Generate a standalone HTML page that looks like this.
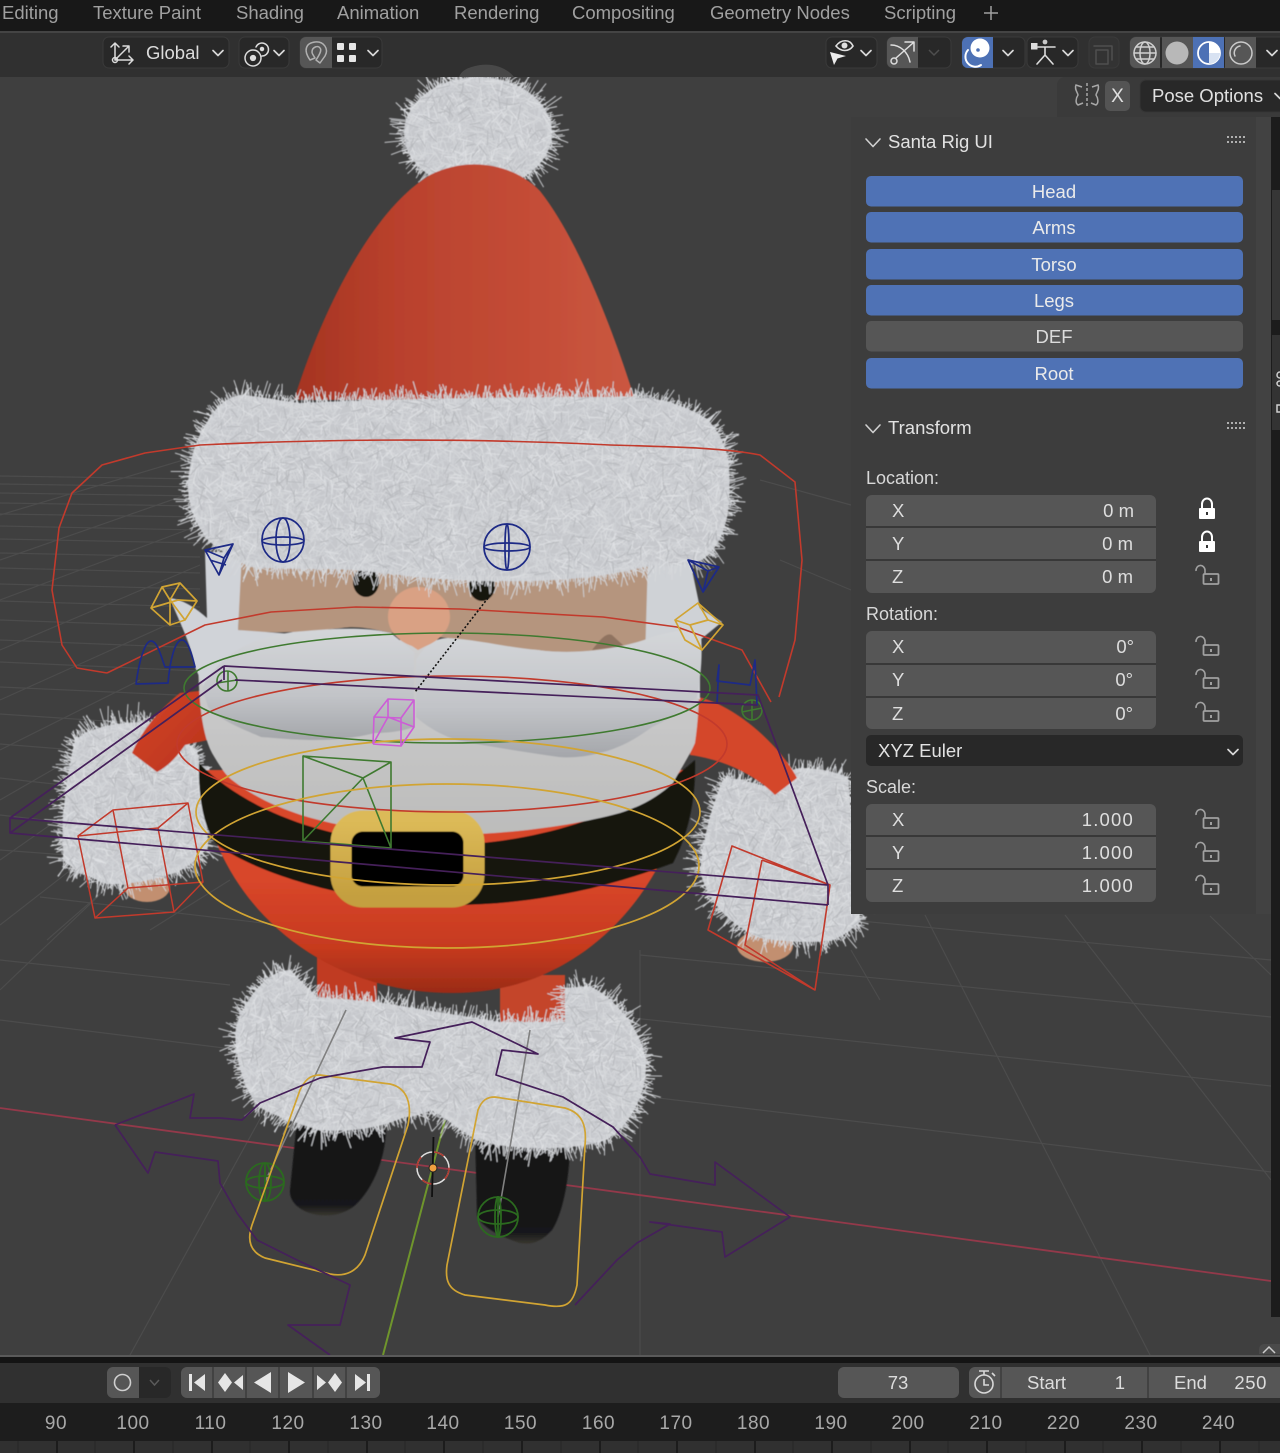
<!DOCTYPE html>
<html><head><meta charset="utf-8"><title>Santa Rig</title>
<style>html,body{margin:0;padding:0;background:#3f3f3f;width:1280px;height:1453px;overflow:hidden}svg{display:block}text{font-family:"Liberation Sans",sans-serif}</style></head>
<body>
<svg id="root" xmlns="http://www.w3.org/2000/svg" width="1280" height="1453" viewBox="0 0 1280 1453">
<defs>
<filter id="soft" x="-5%" y="-5%" width="110%" height="110%"><feGaussianBlur stdDeviation="0.55"/></filter>
<linearGradient id="hat" x1="0" y1="0" x2="1" y2="0"><stop offset="0" stop-color="#a53421"/><stop offset="0.3" stop-color="#b9412d"/><stop offset="0.7" stop-color="#c44d37"/><stop offset="1" stop-color="#ca5841"/></linearGradient>
<linearGradient id="red" x1="0" y1="0" x2="0" y2="1"><stop offset="0.5" stop-color="#d8462a"/><stop offset="0.8" stop-color="#c63a1f"/><stop offset="1" stop-color="#9a2b17"/></linearGradient>
<linearGradient id="belly" x1="0" y1="0" x2="0" y2="1"><stop offset="0" stop-color="#cfcfd0"/><stop offset="1" stop-color="#bcbcbb"/></linearGradient>
<linearGradient id="mus" x1="0" y1="0" x2="0" y2="1"><stop offset="0" stop-color="#d4d6d9"/><stop offset="0.6" stop-color="#c2c4c8"/><stop offset="1" stop-color="#a4a6aa"/></linearGradient>
<linearGradient id="boot" x1="0" y1="0" x2="0" y2="1"><stop offset="0" stop-color="#131315"/><stop offset="0.9" stop-color="#18181a"/><stop offset="1" stop-color="#38362f"/></linearGradient>
<linearGradient id="arm" x1="0" y1="0" x2="1" y2="1"><stop offset="0" stop-color="#d4452a"/><stop offset="1" stop-color="#b9331b"/></linearGradient>
<linearGradient id="buckle" x1="0" y1="0" x2="0" y2="1"><stop offset="0" stop-color="#dcba58"/><stop offset="1" stop-color="#c49f3f"/></linearGradient>
<symbol id="lock" overflow="visible"><path d="M-5 -1v-4a5 5.500 0 0 1 10 0v4" fill="none" stroke="#fff" stroke-width="2"/><rect x="-8" y="-1" width="16" height="11" rx="1" fill="#fff"/><rect x="-1" y="3" width="2" height="3" fill="#333"/></symbol>
<symbol id="unlock" overflow="visible"><path d="M-11 -3a4.500 5 0 0 1 9 -1v4" fill="none" stroke="#a0a0a0" stroke-width="1.600"/><rect x="-3.500" y="0" width="15" height="10" rx="1" fill="none" stroke="#a0a0a0" stroke-width="1.800"/><rect x="3" y="4" width="2" height="3" fill="#a0a0a0"/></symbol>
<symbol id="chev" overflow="visible"><path d="M-5 -2.500L0 2.500L5 -2.500" fill="none" stroke="#d8d8d8" stroke-width="1.700" stroke-linecap="round" stroke-linejoin="round"/></symbol>
<symbol id="pchev" overflow="visible"><path d="M-7 -4L0 3.500L7 -4" fill="none" stroke="#d0d0d0" stroke-width="1.600" stroke-linecap="round" stroke-linejoin="round"/></symbol>
<symbol id="grip" overflow="visible"><path d="M0 0h19M0 5h19" stroke="#b0b0b0" stroke-width="2" stroke-dasharray="2 2"/></symbol>
</defs>

<!-- viewport -->
<rect width="1280" height="1453" fill="#3f3f3f"/>
<g stroke="#4c4c4c" stroke-width="1.200" fill="none">
<path d="M0 476L200 479M0 484L200 487M0 493L200 496M0 503L200 506M0 514L200 517M0 526L200 530M0 539L200 543M0 553L200 557M0 568L200 573M0 584L200 589M0 601L200 607M0 620L200 627M0 640L200 648M0 662L200 671M0 687L200 696M0 714L120 722M0 744L100 752M0 778L90 788M0 815L60 822M0 850L80 856M40 897L280 925M0 960L230 985M0 1020L240 1050"/>
<path d="M0 515L200 455M0 560L200 490M0 600L200 525M0 650L200 565M0 700L200 610M0 750L140 680M0 800L130 725M0 860L100 790M0 925L90 855M0 990L110 885M47 940L110 885M150 930L230 880"/>
<path d="M850 920L1271 960M640 955L1080 998L1271 1017M633 1018L1080 1065L1271 1086M650 1097L1080 1148L1271 1172"/>
<path d="M130 1355L320 1010M640 1355V950M1150 1355L925 915M1271 1180L1065 915M1271 975L1210 916M851 950L880 1000M760 480L851 505M780 560L851 590M770 760L851 820"/>
</g>
<path d="M0 1108L1271 1281" stroke="#93394a" stroke-width="1.800"/>
<path d="M383 1355L445 1120" stroke="#6f952c" stroke-width="2"/>

<g id="santa" filter="url(#soft)">
<!-- hands -->
<ellipse cx="147" cy="887" rx="23" ry="15" fill="#c28f70"/>
<ellipse cx="765" cy="946" rx="28" ry="16" fill="#c28f70"/>
<!-- gloves -->
<path id="f1" d="M75 740C95 724 125 722 150 722C175 735 190 745 197 750C205 790 208 830 208 847C195 863 180 873 167 875C145 882 125 885 107 884C90 878 72 868 64 861C62 840 62 820 64 807C66 785 70 760 75 740Z" fill="#c6c8cc"/>
<path id="f2" d="M700 870C703 845 707 825 712 810C717 795 720 785 724 778C740 778 755 784 770 787C780 775 790 769 800 768C820 768 835 772 848 777C852 820 856 880 860 922C850 931 842 937 830 941C810 943 785 942 760 938C745 932 732 922 722 912C710 898 703 885 700 870Z" fill="#c6c8cc"/>
<!-- arms -->
<path d="M180 693C155 713 140 735 132 753L157 772C170 765 178 755 185 745L208 740L208 690Z" fill="url(#arm)"/>
<path d="M698 697C735 705 780 745 797 778L775 795C755 775 725 760 690 755Z" fill="#d4472b"/>
<!-- legs -->
<rect x="317" y="955" width="60" height="50" fill="#c03a20"/>
<rect x="500" y="975" width="65" height="50" fill="#c4442b"/>
<!-- boots -->
<path d="M298 1110L386 1130C385 1165 368 1195 353 1207C340 1216 328 1216 318 1215C300 1212 289 1202 290 1190Z" fill="url(#boot)"/>
<path d="M475 1130L570 1140C570 1180 562 1215 552 1230C540 1243 530 1245 520 1243C495 1235 480 1225 477 1215Z" fill="url(#boot)"/>
<!-- fur boots -->
<path id="f3" d="M236 1027C248 992 270 970 290 970L317 997L377 1002L500 1022L565 1022L565 988L590 986C622 1002 646 1040 646 1065C646 1098 628 1126 608 1139C580 1151 510 1151 477 1140C455 1128 440 1113 432 1110C425 1113 415 1117 405 1117C375 1130 345 1132 320 1130C290 1122 267 1112 259 1107C242 1088 233 1050 236 1027Z" fill="#c6c8cc"/>
<!-- body red -->
<path d="M200 770C205 880 300 993 453 993C590 993 675 880 690 770Z" fill="url(#red)"/>
<!-- belt -->
<path d="M199 763C198 800 205 835 220 847C270 880 370 905 450 905C530 905 600 890 673 863C688 835 696 800 695 760C640 810 540 845 440 845C340 845 250 815 199 763Z" fill="#131311"/>
<!-- belly -->
<path d="M198 640C198 690 200 730 212 753C222 770 226 775 232 780C255 798 280 808 301 815C350 830 400 835 457 835C520 833 575 825 620 813C645 805 660 795 673 783C680 770 690 755 695 743C700 710 700 670 698 640Z" fill="url(#belly)"/>
<!-- face -->
<path d="M240 545H652L652 640C620 650 570 655 538 650C500 648 470 642 448 638L391 633C370 628 355 626 342 628C320 630 305 633 293 632C270 633 252 632 238 630Z" fill="#b5957e"/>
<path d="M205 552L242 552L238 630L293 634L240 680L205 690L195 667C190 640 178 620 170 598C185 600 198 610 207 618Z" fill="#d0d3d8"/>
<path d="M648 555L690 560L700 608L722 622L700 640L700 700L645 660Z" fill="#cfd2d6"/>
<path d="M592 650C600 640 606 632 612 635L624 646Z" fill="#8f7360"/>
<!-- mustache -->
<path d="M202 688C218 660 240 640 293 632C320 630 360 625 391 633L414 652V727C400 732 385 733 375 733C355 738 335 740 314 740C295 740 275 738 261 737C240 728 220 720 208 707Z" fill="url(#mus)"/>
<path d="M416 660C425 645 435 638 448 638C480 640 510 648 538 650C570 655 620 650 652 637C675 630 695 628 701 633C703 660 700 680 697 697C685 708 668 720 652 727C635 740 615 750 599 753C585 757 570 758 559 757C525 752 490 747 457 740C440 735 425 725 416 717Z" fill="url(#mus)"/>
<!-- eyes, nose -->
<ellipse cx="366" cy="582" rx="13" ry="15" fill="#17120e"/>
<ellipse cx="482" cy="586" rx="13" ry="15" fill="#17120e"/>
<path d="M388 617C388 600 402 587 418 587C436 587 450 600 450 617C450 632 436 642 426 646L418 650L412 646C400 642 388 632 388 617Z" fill="#d9a184"/>
<!-- buckle -->
<rect x="341" y="821" width="133" height="76" rx="22" fill="#060606" stroke="url(#buckle)" stroke-width="21"/>
<!-- pom -->
<ellipse id="f4" cx="478" cy="133" rx="74" ry="56" fill="#c6c8cc"/>
<!-- hat -->
<path d="M294 400C318 322 368 212 430 175C470 155 515 165 540 191C575 235 610 320 635 400Z" fill="url(#hat)"/>
<!-- hat band -->
<path id="f5" d="M188 490C188 470 192 445 207 422C215 408 225 398 240 395C260 396 275 400 300 403C400 398 540 397 637 397C660 398 685 405 707 419C720 432 728 450 729 467C730 490 730 510 725 525C720 545 708 558 696 563C680 566 660 566 644 567C600 578 550 582 503 581C450 582 400 575 355 570C320 568 285 570 251 567C235 560 218 550 207 539C198 527 190 512 188 490Z" fill="#c6c8cc"/>
</g>

<!-- rig -->
<g fill="none" stroke-width="1.600" stroke-linejoin="round">
<!-- red curves -->
<g stroke="#c23a2c">
<path d="M107 673L77 668L62 645L52 590L59 528L72 493L102 465L145 453L200 445C300 440 450 437 610 445C680 447 725 448 760 455L795 482L802 560L795 640L779 697"/>
<path d="M107 673L205 625L271 612L356 607L460 609L603 617L677 627L742 650L771 702"/>
<ellipse cx="452" cy="744" rx="275" ry="68"/>
<path d="M113 810L188 803L203 882L128 888ZM78 836L158 828L174 912L95 918ZM113 810L78 836M188 803L158 828M203 882L174 912M128 888L95 918" stroke-width="1.500"/>
<path d="M732 846L830 885L815 990L708 930ZM732 846L708 930M762 860L745 945L815 990M762 860L830 885"/>
</g>
<!-- green -->
<g stroke="#3f7a30">
<ellipse cx="447" cy="688" rx="263" ry="55"/>
<path d="M303 756L391 762V848L303 841ZM303 756L363 778L391 762M363 778L303 841M363 778L391 848"/>
<circle cx="227" cy="681" r="10"/><path d="M217 683L237 680M228 671V691"/>
<circle cx="752" cy="710" r="10"/><path d="M742 712L762 708M752 700V720"/>
</g>
<path d="M346 1010L265 1182M530 1030L498 1217" stroke="#808080"/>
<g stroke="#2b6a1f" stroke-width="1.800"><circle cx="265" cy="1182" r="19"/><ellipse cx="265" cy="1182" rx="19" ry="6"/><path d="M265 1163V1202"/><ellipse cx="265" cy="1182" rx="6" ry="19"/><circle cx="498" cy="1217" r="20"/><ellipse cx="498" cy="1217" rx="20" ry="7"/><ellipse cx="498" cy="1217" rx="3" ry="20"/><path d="M498 1196V1238"/></g>
<!-- gold -->
<g stroke="#d1a433" stroke-width="1.700">
<ellipse cx="448" cy="812" rx="252" ry="73"/>
<ellipse cx="447" cy="866" rx="252" ry="82"/>
<path d="M162 587L180 583L197 601L185 620L170 625L151 608ZM151 608L178 600L197 601M162 587L170 600L185 620M180 583L170 600L170 625"/>
<path d="M675 620L698 603L723 625L702 650L685 640ZM698 603L708 620L723 625M675 620L690 625L708 620M690 625L702 650"/>
<path d="M320 1075L390 1084C408 1088 412 1105 408 1125L365 1255C358 1272 345 1277 330 1274L265 1258C250 1252 247 1240 252 1225L300 1090C305 1080 310 1075 320 1075Z"/>
<path d="M495 1097L565 1108C582 1113 587 1125 585 1145L577 1285C573 1305 565 1309 545 1305L465 1295C448 1290 445 1280 447 1265L478 1110C482 1100 487 1097 495 1097Z"/>
</g>
<!-- blue -->
<g stroke="#1d2a86" stroke-width="1.700">
<ellipse cx="283" cy="540" rx="21" ry="22"/><ellipse cx="283" cy="541" rx="21" ry="4"/><ellipse cx="283" cy="540" rx="7" ry="22"/>
<ellipse cx="507" cy="547" rx="23" ry="23"/><ellipse cx="507" cy="547" rx="23" ry="4"/><ellipse cx="507" cy="547" rx="2" ry="23"/>
<path d="M205 550L233 544L219 575ZM205 550L224 558L233 544M224 558L219 575M210 560L226 565"/>
<path d="M688 560L719 567L703 592ZM688 560L708 571L719 567M708 571L703 592"/>
<path d="M136 684C140 655 146 641 151 641C158 641 162 660 165 667H195C192 655 188 640 182 640C175 640 170 660 168 683Z"/>
<path d="M719 665L717 681L750 685L755 660L757 705L717 703Z"/>
</g>
<!-- magenta -->
<path d="M374 717L388 699L414 700L401 718ZM373 744L401 746L414 727V700M374 717L373 744M401 718V746M388 717L373 744M388 699V717L414 727" stroke="#cc5dd6"/>
<!-- dotted -->
<path d="M488 598L415 692" stroke="#111" stroke-dasharray="2 2"/>
<!-- purple -->
<g stroke="#45205a" stroke-width="1.700">
<path d="M224 666L10 818L10 833L222 680M224 666L758 695L828 885L828 905M235 680L757 705M10 818L828 885M10 833L828 905M224 666V680"/>
<path d="M115 1125L194 1094L190 1118L220 1118L242 1120L260 1103L320 1078L383 1067L422 1067L430 1042L395 1038L472 1022L538 1054L502 1050L496 1075L563 1097L613 1127L640 1157L650 1174L715 1185L715 1162L790 1217L725 1257L722 1232L650 1222L670 1224L637 1243L617 1260L575 1305"/>
<path d="M115 1125L148 1173L155 1152L218 1161L220 1183L237 1213L257 1240L297 1260L350 1285L340 1325H288L330 1355"/>
</g>
</g>
<!-- origin -->
<g fill="none"><circle cx="433" cy="1168" r="16" stroke="#e0e0e0" stroke-width="1.500"/><circle cx="433" cy="1168" r="16" stroke="#b03a30" stroke-width="1.600" stroke-dasharray="12 13"/><path d="M433.500 1137L432 1197" stroke="#111" stroke-width="1.800"/></g><circle cx="433" cy="1168" r="4" fill="#f0a040" stroke="#222"/>

<!-- top bar -->
<rect width="1280" height="31" fill="#181818"/>
<rect y="31" width="1280" height="2" fill="#444"/>
<g fill="#a0a0a0" font-size="18.500">
<text x="2" y="19">Editing</text><text x="93" y="19">Texture Paint</text><text x="236" y="19">Shading</text><text x="337" y="19">Animation</text><text x="454" y="19">Rendering</text><text x="572" y="19">Compositing</text><text x="710" y="19">Geometry Nodes</text><text x="884" y="19">Scripting</text>
</g>
<path d="M991 6V20M984 13H998" stroke="#a0a0a0" stroke-width="1.500"/>
<!-- tool header -->
<rect y="33" width="1280" height="44" fill="#303030"/>
<path d="M459 77C462 69 470 67 480 65C495 63 508 69 514 77Z" fill="#484848"/>
<g fill="#282828" stroke="#3a3a3a">
<rect x="103" y="37" width="126" height="31" rx="6"/>
<rect x="239" y="37" width="50" height="31" rx="6"/>
<rect x="300" y="37" width="82" height="31" rx="6"/>
<rect x="826" y="37" width="51" height="31" rx="6"/>
<rect x="887" y="37" width="64" height="31" rx="6"/>
<rect x="962" y="37" width="63" height="31" rx="6"/>
<rect x="1027" y="37" width="51" height="31" rx="6"/>
<rect x="1089" y="37" width="30" height="31" rx="6" fill="#333"/>
<rect x="1130" y="37" width="160" height="31" rx="6"/>
</g>
<path d="M306 37h26v31h-26a6 6 0 0 1-6-6v-19a6 6 0 0 1 6-6Z" fill="#565656"/>
<path d="M893 37h25v31h-25a6 6 0 0 1-6-6v-19a6 6 0 0 1 6-6Z" fill="#565656"/>
<path d="M968 37h25v31h-25a6 6 0 0 1-6-6v-19a6 6 0 0 1 6-6Z" fill="#4d71b5"/>
<path d="M1136 37h24v31h-24a6 6 0 0 1-6-6v-19a6 6 0 0 1 6-6Z" fill="#565656"/>
<rect x="1162" y="37" width="31" height="31" fill="#565656"/><rect x="1193" y="37" width="31" height="31" fill="#4d71b5"/><rect x="1225" y="37" width="31" height="31" fill="#565656"/>
<!-- icons toolbar -->
<g fill="none" stroke="#dcdcdc" stroke-width="1.500" stroke-linecap="round" stroke-linejoin="round">
<path d="M115 60V43M111 47L115 43L119 47M115 60H133M129 56L133 60L129 64M115 60L129 46M123 46H129V52"/><circle cx="115" cy="60" r="2.500"/>
<circle cx="253" cy="58" r="8"/><circle cx="253" cy="58" r="2.400" fill="#dcdcdc"/><path d="M256 47a6.500 6.500 0 1 1 6 9"/><circle cx="262" cy="49" r="1.500" fill="#dcdcdc"/>
<path d="M310 60C303 50 306 43 315 42C324 41 329 49 325 56L320 63L316 60C320 54 322 50 320 48C318 45 312 47 312 52C312 54 314 56 315 58L310 60" stroke="#b0b0b0"/>
<path d="M891 45C900 45 908 52 910 62M896 58L913 43M905 42H914V51" stroke="#dedede"/><circle cx="894" cy="61" r="3"/>
<path d="M968 50A10 10 0 0 0 981 65" stroke="#fff" stroke-width="2"/>
<path d="M1038 47H1055M1045 47V55L1037 64M1045 55L1053 64" stroke-width="1.600"/>
<path d="M1094 46H1112V60M1096 50H1108V64H1096Z" stroke="#4f4f4f"/>
<g stroke="#d0d0d0"><circle cx="1145" cy="53" r="11"/><ellipse cx="1145" cy="53" rx="5" ry="11"/><path d="M1134 53H1156M1136 47H1154M1136 59H1154"/></g>
<circle cx="1241" cy="53" r="11" stroke="#cacaca"/><path d="M1235 56a7 7 0 0 1 5-10" stroke="#cacaca"/>
</g>
<circle cx="980" cy="48" r="9.500" fill="#fff"/><circle cx="978" cy="50" r="1.800" fill="#4d71b5"/>
<rect x="1031" y="43" width="6.500" height="6.500" fill="#dcdcdc"/><circle cx="1045" cy="42" r="2.400" fill="#c8c8c8"/>
<circle cx="1177" cy="53" r="11.500" fill="#b8b8b8"/>
<circle cx="1209" cy="53" r="11" fill="#4d71b5" stroke="#fff" stroke-width="1.800"/><path d="M1209 42a11 11 0 0 1 0 22Z" fill="#fff"/><path d="M1209 53H1220A11 11 0 0 1 1209 64Z" fill="#d8e2f2"/>
<!-- eye icon -->
<path d="M836 46C841 39 850 39 853 46C849 52 841 52 836 46Z" fill="none" stroke="#e0e0e0" stroke-width="1.600"/><circle cx="844.500" cy="45.500" r="3" fill="#e0e0e0"/>
<path d="M830 52L846 56L837.500 58.500L834 65Z" fill="#ececec"/>
<!-- grid dots -->
<g fill="#e6e6e6"><rect x="337" y="43" width="7" height="7" rx="1"/><rect x="349" y="43" width="7" height="7" rx="1"/><rect x="337" y="55" width="7" height="7" rx="1"/><rect x="349" y="55" width="7" height="7" rx="1"/></g>
<text x="146" y="59" fill="#dcdcdc" font-size="18.500">Global</text>
<use href="#chev" x="218" y="53"/><use href="#chev" x="279" y="53"/><use href="#chev" x="373" y="53"/><use href="#chev" x="866" y="53"/><use href="#chev" x="1008" y="53"/><use href="#chev" x="1068" y="53"/><use href="#chev" x="1272" y="53"/>
<path d="M929 50L934 55L939 50" fill="none" stroke="#4e4e4e" stroke-width="1.500"/>

<!-- sidebar -->
<rect x="851" y="117" width="405" height="290" fill="#3d3d3d"/>
<rect x="851" y="404" width="405" height="510" fill="#3d3d3d"/>
<rect x="1256" y="117" width="15" height="797" fill="#424242"/>
<rect x="1271" y="117" width="9" height="1200" fill="#1c1c1c"/>
<rect x="1272" y="190" width="8" height="130" fill="#363636"/>
<rect x="1272" y="335" width="8" height="95" fill="#333"/>
<path d="M1280 372C1276 372 1276 378 1280 378M1280 381C1276 381 1276 386 1280 386M1280 405H1277V412H1280" fill="none" stroke="#cfcfcf" stroke-width="1.500"/>
<!-- pose options tab -->
<path d="M1057 117V85a8 8 0 0 1 8-8H1280V117Z" fill="#3a3a3a"/>
<g fill="none" stroke="#a8a8a8" stroke-width="1.500"><path d="M1087 83V107" stroke-dasharray="3 2"/><path d="M1082 87L1076 85C1074 89 1078 93 1078 95C1076 98 1075 103 1078 105L1083 103M1092 87L1098 85C1100 89 1096 93 1096 95C1098 98 1099 103 1096 105L1091 103"/></g>
<rect x="1105" y="81" width="25" height="30" rx="5" fill="#545454"/>
<text x="1117.500" y="102" fill="#e0e0e0" font-size="19" text-anchor="middle">X</text>
<rect x="1140" y="80" width="150" height="32" rx="6" fill="#282828" stroke="#353535"/>
<text x="1152" y="102" fill="#e0e0e0" font-size="18.500">Pose Options</text>
<use href="#chev" x="1280" y="96"/>

<!-- Santa Rig UI panel -->
<use href="#pchev" x="873" y="143"/>
<text x="888" y="148" fill="#e2e2e2" font-size="18.500">Santa Rig UI</text>
<use href="#grip" x="1227" y="137"/>
<g>
<rect x="866" y="176" width="377" height="30.500" rx="5" fill="#4f72b5"/>
<rect x="866" y="212" width="377" height="30.500" rx="5" fill="#4f72b5"/>
<rect x="866" y="249" width="377" height="30.500" rx="5" fill="#4f72b5"/>
<rect x="866" y="285" width="377" height="30.500" rx="5" fill="#4f72b5"/>
<rect x="866" y="321" width="377" height="30.500" rx="5" fill="#565656"/>
<rect x="866" y="358" width="377" height="30.500" rx="5" fill="#4f72b5"/>
</g>
<g fill="#eaeaea" font-size="18.500" text-anchor="middle">
<text x="1054" y="198">Head</text><text x="1054" y="234">Arms</text><text x="1054" y="271">Torso</text><text x="1054" y="307">Legs</text><text x="1054" y="343" fill="#dcdcdc">DEF</text><text x="1054" y="380">Root</text>
</g>
<!-- Transform panel -->
<use href="#pchev" x="873" y="429"/>
<text x="888" y="434" fill="#e2e2e2" font-size="18.500">Transform</text>
<use href="#grip" x="1227" y="423"/>
<g fill="#d8d8d8" font-size="18"><text x="866" y="484">Location:</text><text x="866" y="620">Rotation:</text><text x="866" y="793">Scale:</text></g>
<g fill="#565656">
<rect x="866" y="495" width="290" height="98" rx="6"/>
<rect x="866" y="631" width="290" height="98" rx="6"/>
<rect x="866" y="804" width="290" height="98" rx="6"/>
</g>
<g stroke="#383838" stroke-width="2"><path d="M866 527H1156M866 560H1156M866 664H1156M866 697H1156M866 836H1156M866 869H1156"/></g>
<g fill="#dedede" font-size="18.500">
<text x="892" y="517">X</text><text x="892" y="550">Y</text><text x="892" y="583">Z</text>
<text x="892" y="653">X</text><text x="892" y="686">Y</text><text x="892" y="720">Z</text>
<text x="892" y="826">X</text><text x="892" y="859">Y</text><text x="892" y="892">Z</text>
</g>
<g fill="#dedede" font-size="18.500" text-anchor="end">
<text x="1134" y="517">0 m</text><text x="1133" y="550">0 m</text><text x="1133" y="583">0 m</text>
<text x="1134" y="653">0°</text><text x="1133" y="686">0°</text><text x="1133" y="720">0°</text>
<g letter-spacing="1.200"><text x="1134" y="826">1.000</text><text x="1134" y="859">1.000</text><text x="1134" y="892">1.000</text></g>
</g>
<use href="#lock" x="1207" y="509"/><use href="#lock" x="1207" y="542"/>
<use href="#unlock" x="1207" y="574"/><use href="#unlock" x="1207" y="645"/><use href="#unlock" x="1207" y="678"/><use href="#unlock" x="1207" y="711"/><use href="#unlock" x="1207" y="818"/><use href="#unlock" x="1207" y="851"/><use href="#unlock" x="1207" y="884"/>
<rect x="866" y="735" width="377" height="31" rx="5" fill="#282828"/>
<text x="878" y="757" fill="#e2e2e2" font-size="18.500">XYZ Euler</text>
<use href="#chev" x="1233" y="752"/>

<!-- timeline -->
<rect y="1355" width="1280" height="2" fill="#5a5a5a"/>
<rect y="1357" width="1280" height="6" fill="#141414"/>
<rect y="1363" width="1280" height="40" fill="#303030"/>
<rect y="1403" width="1280" height="38" fill="#1d1d1d"/>
<rect y="1441" width="1280" height="12" fill="#303030"/>
<path d="M1259 1354h21v-10h-16a5 5 0 0 0-5 5Z" fill="#4a4a4a"/><path d="M1263 1353L1269 1347L1275 1353" fill="none" stroke="#ccc" stroke-width="1.500"/>
<path d="M107 1373a6 6 0 0 1 6-6H139V1398H113a6 6 0 0 1-6-6Z" fill="#565656"/>
<path d="M139 1367H165a6 6 0 0 1 6 6V1392a6 6 0 0 1-6 6H139Z" fill="#282828"/>
<circle cx="122.500" cy="1382.500" r="8" fill="none" stroke="#cfcfcf" stroke-width="1.600"/>
<path d="M150 1380L154.500 1385L159 1380" fill="none" stroke="#5a5a5a" stroke-width="1.500"/>
<rect x="181" y="1367" width="199" height="31" rx="6" fill="#565656"/>
<path d="M213 1367V1398M246 1367V1398M279 1367V1398M313 1367V1398M346 1367V1398" stroke="#3c3c3c" stroke-width="1.500"/>
<g fill="#e6e6e6">
<path d="M189 1374h3v17h-3ZM205 1374v17l-11-8.500Z"/>
<path d="M225 1373l7 9.500l-7 9.500l-7-9.500ZM243 1375v15l-9-7.500Z"/>
<path d="M271 1372v21l-17-10.500Z"/>
<path d="M288 1372v21l17-10.500Z"/>
<path d="M317 1375v15l9-7.500ZM335 1373l7 9.500l-7 9.500l-7-9.500Z"/>
<path d="M370 1374h-3v17h3ZM355 1374v17l11-8.500Z"/>
</g>
<rect x="838" y="1367" width="121" height="31" rx="6" fill="#565656"/>
<text x="898" y="1389" fill="#dcdcdc" font-size="18.500" text-anchor="middle">73</text>
<path d="M975 1367H1280V1398H975a6 6 0 0 1-6-6V1373a6 6 0 0 1 6-6Z" fill="#565656"/>
<path d="M1001 1367V1398M1148 1367V1398" stroke="#3c3c3c" stroke-width="1.500"/>
<g fill="none" stroke="#d8d8d8" stroke-width="1.600"><circle cx="984" cy="1384" r="9"/><path d="M984 1379V1385H989M979 1371H989M984 1371V1375M992 1373L995 1376"/></g>
<g fill="#dcdcdc" font-size="18.500">
<text x="1027" y="1389">Start</text><text x="1125" y="1389" text-anchor="end">1</text><text x="1174" y="1389">End</text><text x="1267" y="1389" text-anchor="end" letter-spacing=".6">250</text>
</g>
<g fill="#a8a8a8" font-size="19" letter-spacing=".5" text-anchor="middle">
<text x="56" y="1429">90</text><text x="133" y="1429">100</text><text x="210.500" y="1429">110</text><text x="288" y="1429">120</text><text x="366" y="1429">130</text><text x="443" y="1429">140</text><text x="520.500" y="1429">150</text><text x="598.500" y="1429">160</text><text x="676" y="1429">170</text><text x="753.500" y="1429">180</text><text x="831" y="1429">190</text><text x="908" y="1429">200</text><text x="986" y="1429">210</text><text x="1063.500" y="1429">220</text><text x="1141" y="1429">230</text><text x="1218.500" y="1429">240</text>
</g>
<g stroke="#161616" stroke-width="1.500"><path d="M57 1441V1453M134 1441V1453M212 1441V1453M289 1441V1453M367 1441V1453M444 1441V1453M522 1441V1453M600 1441V1453M677 1441V1453M755 1441V1453M832 1441V1453M910 1441V1453M987 1441V1453M1065 1441V1453M1142 1441V1453M1220 1441V1453"/></g>
<g stroke="#262626" stroke-width="1"><path d="M18 1441V1453M95 1441V1453M173 1441V1453M250 1441V1453M328 1441V1453M405 1441V1453M483 1441V1453M561 1441V1453M638 1441V1453M716 1441V1453M793 1441V1453M871 1441V1453M948 1441V1453M1026 1441V1453M1103 1441V1453M1181 1441V1453M1259 1441V1453"/></g>
</svg>
<script>
(function(){
var seed=12345;function R(){seed=(seed*1664525+1013904223)%4294967296;return seed/4294967296;}
var svg=document.getElementById('root'),NS='http://www.w3.org/2000/svg',pt=svg.createSVGPoint();
function inside(el,x,y){pt.x=x;pt.y=y;return el.isPointInFill(pt);}
['f1','f2','f3','f4','f5'].forEach(function(id){
 var el=document.getElementById(id),L=el.getTotalLength(),b=el.getBBox();
 var buckets={'#cfd1d5':'','#d6d8db':'','#dfe1e4':'','#b6b8bc':''},keys=Object.keys(buckets),s,x,y;
 var n=Math.round(b.width*b.height/12);
 for(var i=0;i<n;i++){x=b.x+R()*b.width;y=b.y+R()*b.height;if(!inside(el,x,y))continue;
  var a=R()*Math.PI*2,l=6+R()*10,r=R(),k=r<.55?keys[0]:r<.82?keys[1]:r<.92?keys[2]:keys[3];
  buckets[k]+='M'+x.toFixed(1)+' '+y.toFixed(1)+'l'+(Math.cos(a)*l).toFixed(1)+' '+(Math.sin(a)*l).toFixed(1);}
 for(s=0;s<L;s+=1.6){var p=el.getPointAtLength(s),q=el.getPointAtLength(Math.min(L,s+1)),tx=q.x-p.x,ty=q.y-p.y,nx=ty,ny=-tx,m=Math.hypot(nx,ny)||1;nx/=m;ny/=m;
  if(inside(el,p.x+nx*3,p.y+ny*3)){nx=-nx;ny=-ny;}
  var j=(R()-.5)*1.1,c=Math.cos(j),d=Math.sin(j),ax=nx*c-ny*d,ay=nx*d+ny*c,r2=R(),len=2+r2*r2*r2*15+R()*4;
  var kk=R()<.6?keys[1]:keys[0];
  buckets[kk]+='M'+(p.x-nx*5).toFixed(1)+' '+(p.y-ny*5).toFixed(1)+'L'+(p.x+ax*len).toFixed(1)+' '+(p.y+ay*len).toFixed(1);}
 var g=document.createElementNS(NS,'g');
 keys.forEach(function(k){var pa=document.createElementNS(NS,'path');pa.setAttribute('d',buckets[k]);pa.setAttribute('stroke',k);pa.setAttribute('stroke-width','0.900');pa.setAttribute('fill','none');g.appendChild(pa);});
 el.parentNode.insertBefore(g,el.nextSibling);
});
})();
</script>
</body></html>
